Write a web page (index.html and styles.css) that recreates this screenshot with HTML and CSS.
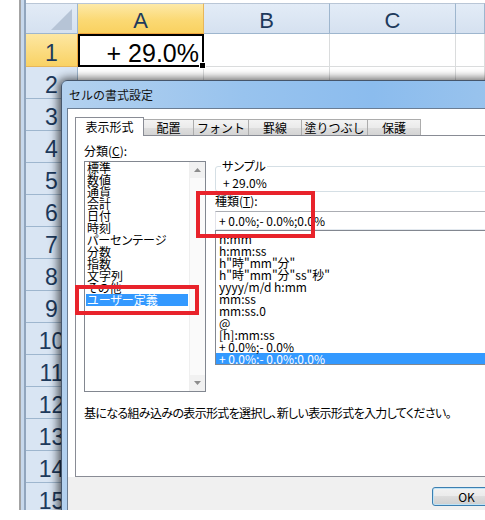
FILE: index.html
```html
<!DOCTYPE html>
<html lang="ja">
<head>
<meta charset="utf-8">
<title>セルの書式設定</title>
<link rel="stylesheet" href="styles.css">
</head>
<body>
<div class="screen">
  <div class="excel">
    <div class="margin"></div>
    <div class="frame"></div>
    <div class="sheet">
      <div class="corner"><svg class="tri" width="22" height="22" viewBox="0 0 22 22"><polygon points="21,0 21,21 0,21" fill="#b6c4d6"/></svg></div>
      <div class="ch sel">A</div>
      <div class="ch">B</div>
      <div class="ch">C</div>
      <div class="ch"></div>

      <div class="rh sel">1</div><div class="c act">+ 29.0%</div><div class="c"></div><div class="c"></div><div class="c"></div>
      <div class="rh">2</div><div class="c"></div><div class="c"></div><div class="c"></div><div class="c"></div>
      <div class="rh">3</div><div class="c"></div><div class="c"></div><div class="c"></div><div class="c"></div>
      <div class="rh">4</div><div class="c"></div><div class="c"></div><div class="c"></div><div class="c"></div>
      <div class="rh">5</div><div class="c"></div><div class="c"></div><div class="c"></div><div class="c"></div>
      <div class="rh">6</div><div class="c"></div><div class="c"></div><div class="c"></div><div class="c"></div>
      <div class="rh">7</div><div class="c"></div><div class="c"></div><div class="c"></div><div class="c"></div>
      <div class="rh">8</div><div class="c"></div><div class="c"></div><div class="c"></div><div class="c"></div>
      <div class="rh">9</div><div class="c"></div><div class="c"></div><div class="c"></div><div class="c"></div>
      <div class="rh">10</div><div class="c"></div><div class="c"></div><div class="c"></div><div class="c"></div>
      <div class="rh">11</div><div class="c"></div><div class="c"></div><div class="c"></div><div class="c"></div>
      <div class="rh">12</div><div class="c"></div><div class="c"></div><div class="c"></div><div class="c"></div>
      <div class="rh">13</div><div class="c"></div><div class="c"></div><div class="c"></div><div class="c"></div>
      <div class="rh">14</div><div class="c"></div><div class="c"></div><div class="c"></div><div class="c"></div>
      <div class="rh">15</div><div class="c"></div><div class="c"></div><div class="c"></div><div class="c"></div>
    </div>
  </div>

  <div class="dialog">
    <div class="titlebar">セルの書式設定</div>
    <div class="client">
      <div class="tabarea">
        <div class="tabs">
          <div class="tab active t1">表示形式</div>
          <div class="tab t2">配置</div>
          <div class="tab t3">フォント</div>
          <div class="tab t4">罫線</div>
          <div class="tab t5">塗りつぶし</div>
          <div class="tab t6">保護</div>
        </div>
        <div class="panel">
          <div class="cols">
            <div class="leftcol">
              <div class="lbl">分類(<u>C</u>):</div>
              <div class="catbox">
                <ul class="catlist">
                  <li>標準</li>
                  <li>数値</li>
                  <li>通貨</li>
                  <li>会計</li>
                  <li>日付</li>
                  <li>時刻</li>
                  <li>パーセンテージ</li>
                  <li>分数</li>
                  <li>指数</li>
                  <li>文字列</li>
                  <li>その他</li>
                  <li class="selected">ユーザー定義</li>
                </ul>
                <div class="vscroll">
                  <div class="sbtn"><svg width="7" height="4" viewBox="0 0 7 4"><polygon points="0,4 7,4 3.5,0" fill="#8c8c8c"/></svg></div>
                  <div class="sbtn"><svg width="7" height="4" viewBox="0 0 7 4"><polygon points="0,0 7,0 3.5,4" fill="#8c8c8c"/></svg></div>
                </div>
              </div>
            </div>
            <div class="rightcol">
              <fieldset class="sample">
                <legend>サンプル</legend>
                <div class="sval">+ 29.0%</div>
              </fieldset>
              <div class="lbl kind">種類(<u>T</u>):</div>
              <div class="input">+ 0.0%;- 0.0%;0.0%</div>
              <ul class="fmtlist">
                <li>h:mm</li>
                <li>h:mm:ss</li>
                <li>h"時"mm"分"</li>
                <li>h"時"mm"分"ss"秒"</li>
                <li>yyyy/m/d h:mm</li>
                <li>mm:ss</li>
                <li>mm:ss.0</li>
                <li>@</li>
                <li>[h]:mm:ss</li>
                <li>+ 0.0%;- 0.0%</li>
                <li class="selected">+ 0.0%;- 0.0%;0.0%</li>
              </ul>
            </div>
          </div>
          <p class="desc">基になる組み込みの表示形式を選択し、新しい表示形式を入力してください。</p>
        </div>
      </div>
      <div class="btnbar">
        <button class="ok">OK</button>
      </div>
    </div>
  </div>

  <div class="mark mark1"></div>
  <div class="mark mark2"></div>
</div>
</body>
</html>
```

FILE: styles.css
```css
* { box-sizing: border-box; }
html, body { margin: 0; padding: 0; background: #fff; }
body { width: 485px; height: 520px; overflow: hidden; font-family: "Noto Sans CJK JP", sans-serif; }

.screen { position: relative; width: 485px; height: 510px; overflow: hidden; }

/* ---------- Excel sheet ---------- */
.excel { display: flex; height: 510px; }
.margin { width: 19px; flex: none; background: #fff; }
.frame { width: 7px; flex: none; border-left: 2px solid #a3a3a3; border-right: 2px solid #91a5bd; background: #c7d8ec; }
.sheet {
  flex: 1;
  display: grid;
  grid-template-columns: 52px 126px 126px 126px 1fr;
  grid-template-rows: 31px 33px repeat(14, 32px);
  padding-top: 3px;
  background: #fff;
  font-family: "Liberation Sans", Arial, sans-serif;
}
.corner {
  background: linear-gradient(#e2ebf6, #d5e1f0);
  border-top: 1px solid #b9c6d6;
  border-right: 1px solid #9eb6ce;
  border-bottom: 1px solid #9eb6ce;
  display: flex; align-items: flex-end; justify-content: flex-end;
  padding: 0 4px 2px 0;
}
.tri { display: block; }
.ch {
  background: linear-gradient(#e3ecf7, #d5e1f0);
  border-top: 1px solid #b9c6d6;
  border-right: 1px solid #9eb6ce;
  border-bottom: 1px solid #9eb6ce;
  color: #1e3a5c;
  font-size: 22px;
  line-height: 22px;
  display: flex; align-items: center; justify-content: center;
  padding-top: 5px;
}
.ch.sel {
  background: linear-gradient(#fde9a8, #fbd974 55%, #f9d160);
  border-bottom: 1px solid #f0a63c;
  border-right-color: #e7b65a;
}
.rh {
  background: #d9e5f3;
  border-right: 1px solid #9eb6ce;
  border-bottom: 1px solid #9eb6ce;
  color: #1e3a5c;
  font-size: 23px;
  line-height: 23px;
  display: flex; align-items: center; justify-content: center;
  padding-top: 6px;
}
.rh.sel {
  background: linear-gradient(#fde7a2, #f9d264);
  border-right: 1px solid #f0a63c;
  border-bottom-color: #e7b65a;
}
.c { border-right: 1px solid #dadcdd; border-bottom: 1px solid #dadcdd; }
.c.act {
  position: relative;
  border: 2px solid #000;
  font-size: 25px;
  line-height: 25px;
  text-align: right;
  padding: 5px 3px 0 0;
  color: #000;
}
.c.act::after {
  content: "";
  position: absolute;
  right: -4px; bottom: -4px;
  width: 5px; height: 5px;
  background: #000;
  border: 1px solid #fff;
}

/* ---------- Dialog ---------- */
.dialog {
  position: absolute;
  left: 61px; top: 80px;
  width: 520px; height: 440px;
  border: 1px solid #46566b;
  border-radius: 6px 6px 0 0;
  padding: 0 5px;
  background: linear-gradient(90deg, #b3d1ef 0%, #98c3ee 35%, #8bbcee 60%, #a3c8ec 100%);
  box-shadow: -4px 0 9px rgba(0,0,0,.45), 0 -3px 8px rgba(0,0,0,.3);
  display: flex; flex-direction: column;
  font-size: 12px;
  color: #000;
}
.titlebar {
  height: 27px; flex: none;
  display: flex; align-items: center;
  padding-left: 2px;
  font-size: 12px;
  color: #111;
}
.client {
  flex: 1;
  border: 1px solid #6b7d93;
  background: #fff;
  display: flex; flex-direction: column;
}
.tabarea { padding: 8px 0 0 7px; flex: none; }
.tabs { display: flex; align-items: flex-end; height: 18px; position: relative; z-index: 1; }
.tab {
  height: 16px;
  border: 1px solid #acacac;
  border-bottom: none;
  border-left: none;
  background: linear-gradient(#f3f3f3 0%, #ebebeb 50%, #dedede 51%, #d4d4d4 100%);
  font-size: 12px;
  line-height: 15px;
  text-align: center;
  white-space: nowrap;
}
.tab.active {
  height: 19px;
  margin-bottom: -1px;
  background: #fff;
  border: 1px solid #898c95;
  border-bottom: none;
  line-height: 18px;
}
.t1 { width: 69px; }
.t2 { width: 50px; }
.t3 { width: 55px; }
.t4 { width: 53px; }
.t5 { width: 66px; }
.t6 { width: 53px; }

.panel {
  width: 560px;
  height: 342px;
  border: 1px solid #898c95;
  background: #fff;
  padding: 8px 0 0 8px;
}
.cols { display: flex; }
.leftcol { width: 122px; flex: none; }
.lbl { height: 17px; line-height: 14px; font-size: 12px; white-space: nowrap; }
.lbl u { text-decoration-thickness: 1px; text-underline-offset: 1px; }
.catbox {
  height: 231px;
  border: 1px solid #828790;
  display: flex;
}
.catlist {
  list-style: none; margin: 0; padding: 0;
  width: 104px; flex: none;
  font-size: 12px;
  font-feature-settings: "palt";
}
.catlist li { line-height: 12px; height: 12px; padding-left: 1px; margin-left: 1px; width: 102px; white-space: nowrap; }
.catlist li.selected { background: #3399ff; color: #fff; }
.vscroll {
  width: 16px; flex: none;
  display: flex; flex-direction: column; justify-content: space-between;
  background: #fafafa;
  border-left: 1px solid #efefef;
}
.sbtn { height: 16px; display: flex; align-items: center; justify-content: center; background: #f1f1f1; }
.sbtn svg { display: block; }

.rightcol { margin-left: 9px; width: 320px; flex: none; }
.sample {
  margin: 16px 0 0 0;
  padding: 0 0 2px 5px;
  border: 1px solid #d5dfe5;
  border-radius: 3px;
  min-width: 0;
}
.sample legend { padding: 0 1px; font-size: 12px; line-height: 12px; font-feature-settings: "palt"; }
.sval { line-height: 12px; padding: 5px 0 0 2px; font-size: 12px; }
.kind { margin-top: 2px; }
.input {
  height: 19px;
  border: 1px solid #abadb3;
  border-left-color: #e2e3ea;
  border-bottom-color: #e3e9ef;
  padding-left: 3px;
  line-height: 17px;
  font-size: 12px;
  white-space: nowrap;
}
.fmtlist {
  list-style: none; margin: 0; padding: 2px 0 0 0;
  height: 135px;
  border: 1px solid #828790;
  overflow: hidden;
  font-size: 12px;
}
.fmtlist li { line-height: 12px; height: 12px; padding-left: 3px; white-space: nowrap; }
.fmtlist li.selected { background: #3399ff; color: #fff; }

.desc { margin: 14px 0 0 0; line-height: 14px; font-size: 12px; font-feature-settings: "palt"; letter-spacing: -0.65px; white-space: nowrap; }

.btnbar { flex: 1; background: #f0f0f0; padding: 10px 0 0 364px; }
.ok {
  width: 69px; height: 19px;
  border: 1px solid #3c7fb1;
  border-radius: 3px;
  background: linear-gradient(#f2f2f2 0%, #ebebeb 48%, #dddddd 50%, #cfcfcf 100%);
  box-shadow: inset 0 0 0 1px #bfe3f6;
  font-family: "Noto Sans CJK JP", sans-serif;
  font-size: 12px;
  line-height: 15px;
  padding: 0;
  color: #000;
}

/* ---------- annotation marks ---------- */
.mark { position: absolute; border: 4px solid #e8232b; }
.mark1 { left: 75px; top: 285px; width: 124px; height: 30px; }
.mark2 { left: 196px; top: 191px; width: 119px; height: 47px; }
```
